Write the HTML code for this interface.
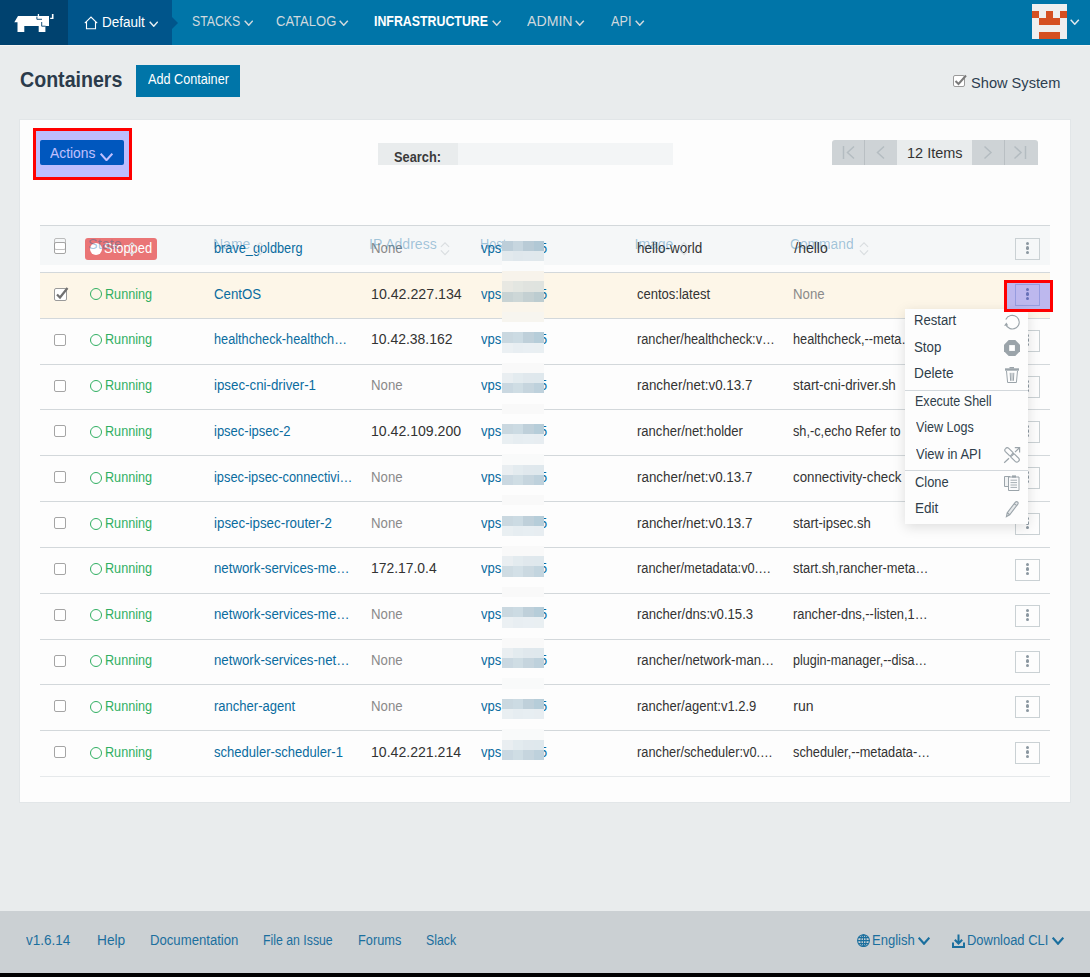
<!DOCTYPE html>
<html><head><meta charset="utf-8"><style>
html,body{margin:0;padding:0}
body{width:1090px;height:977px;position:relative;overflow:hidden;background:#e9eced;font-family:"Liberation Sans", sans-serif}
.t{position:absolute;white-space:nowrap;transform-origin:0 0}
</style></head><body>
<div style="position:absolute;left:0px;top:0px;width:1090px;height:45px;background:#0075a8"></div>
<div style="position:absolute;left:0px;top:0px;width:68px;height:45px;background:#00426f"></div>
<div style="position:absolute;left:68px;top:0px;width:104px;height:45px;background:#00558b"></div>
<svg style="position:absolute;left:172px;top:17px" width="6" height="12"><path d="M0 0 L6 6 L0 12 Z" fill="#00558b"/></svg>
<div style="position:absolute;left:0px;top:45px;width:1090px;height:1px;background:#f6f5f3"></div>
<svg style="position:absolute;left:0;top:0" width="68" height="45" viewBox="0 0 68 45">
<path fill="#fff" d="M14.3 22.2 L18 16 L49 16 L49 25.9 L45.4 25.9 L45.4 32 L38.7 32 L38.7 26 L24.3 26 L24.3 32 L17.5 32 L17.5 22.2 Z"/>
<path fill="#fff" d="M37.8 13.9 L39.1 13.9 L39.1 16.5 L37.8 16.5 Z M51.9 13.9 L53.5 13.9 L53.5 19 L50.2 19 L50.2 17.7 L51.9 17.7 Z"/>
<path fill="none" stroke="#00426f" stroke-width="0.9" d="M36.9 16.6 L36.9 19.3 L42 19.3 M41.7 22 L41.7 26.2 L45.6 26.2"/>
</svg>
<svg style="position:absolute;left:84px;top:16px" width="15" height="14" viewBox="0 0 15 14">
<path fill="none" stroke="#fff" stroke-width="1.1" d="M0.8 7.2 L7 1 L13.2 7.2 M2.5 5.7 L2.5 12.8 L11.5 12.8 L11.5 5.7"/></svg>
<span class="t" id="t0" style="left:102.03px;top:11.65px;font-size:14px;line-height:20px;font-weight:400;color:#fff;transform:scaleX(0.9651);">Default</span>
<svg style="position:absolute;left:148.5px;top:20.5px" width="9.5" height="6" viewBox="0 0 9.5 6"><path fill="none" stroke="#e6eef2" stroke-width="1.5" d="M0.7 0.7 L4.75 5.2 L8.8 0.7"/></svg>
<span class="t" id="t1" style="left:191.52px;top:11.15px;font-size:14px;line-height:20px;font-weight:400;color:#d0d9de;transform:scaleX(0.8778);">STACKS</span>
<svg style="position:absolute;left:243.5px;top:19.8px" width="9.5" height="6" viewBox="0 0 9.5 6"><path fill="none" stroke="#d0d9de" stroke-width="1.5" d="M0.7 0.7 L4.75 5.2 L8.8 0.7"/></svg>
<span class="t" id="t2" style="left:275.67px;top:11.15px;font-size:14px;line-height:20px;font-weight:400;color:#d0d9de;transform:scaleX(0.9302);">CATALOG</span>
<svg style="position:absolute;left:339.3px;top:19.8px" width="9.5" height="6" viewBox="0 0 9.5 6"><path fill="none" stroke="#d0d9de" stroke-width="1.5" d="M0.7 0.7 L4.75 5.2 L8.8 0.7"/></svg>
<span class="t" id="t3" style="left:374.12px;top:11.15px;font-size:14px;line-height:20px;font-weight:700;color:#fff;transform:scaleX(0.8828);">INFRASTRUCTURE</span>
<svg style="position:absolute;left:491.6px;top:19.8px" width="9.5" height="6" viewBox="0 0 9.5 6"><path fill="none" stroke="#d0d9de" stroke-width="1.5" d="M0.7 0.7 L4.75 5.2 L8.8 0.7"/></svg>
<span class="t" id="t4" style="left:527.00px;top:11.15px;font-size:14px;line-height:20px;font-weight:400;color:#d0d9de;transform:scaleX(1.0091);">ADMIN</span>
<svg style="position:absolute;left:575.3px;top:19.8px" width="9.5" height="6" viewBox="0 0 9.5 6"><path fill="none" stroke="#d0d9de" stroke-width="1.5" d="M0.7 0.7 L4.75 5.2 L8.8 0.7"/></svg>
<span class="t" id="t5" style="left:611.20px;top:11.15px;font-size:14px;line-height:20px;font-weight:400;color:#d0d9de;transform:scaleX(0.9045);">API</span>
<svg style="position:absolute;left:635.3px;top:19.8px" width="9.5" height="6" viewBox="0 0 9.5 6"><path fill="none" stroke="#d0d9de" stroke-width="1.5" d="M0.7 0.7 L4.75 5.2 L8.8 0.7"/></svg>
<div style="position:absolute;left:1032px;top:4px;width:35px;height:35px;background:#efefef"></div>
<div style="position:absolute;left:1032px;top:11px;width:7px;height:7px;background:#d55022"></div>
<div style="position:absolute;left:1046px;top:11px;width:7px;height:7px;background:#d55022"></div>
<div style="position:absolute;left:1060px;top:11px;width:7px;height:7px;background:#d55022"></div>
<div style="position:absolute;left:1039px;top:18px;width:7px;height:7px;background:#d55022"></div>
<div style="position:absolute;left:1046px;top:18px;width:7px;height:7px;background:#d55022"></div>
<div style="position:absolute;left:1053px;top:18px;width:7px;height:7px;background:#d55022"></div>
<div style="position:absolute;left:1039px;top:32px;width:7px;height:7px;background:#d55022"></div>
<div style="position:absolute;left:1046px;top:32px;width:7px;height:7px;background:#d55022"></div>
<div style="position:absolute;left:1053px;top:32px;width:7px;height:7px;background:#d55022"></div>
<svg style="position:absolute;left:1070.3px;top:18.8px" width="9.5" height="6" viewBox="0 0 9.5 6"><path fill="none" stroke="#dfe8ee" stroke-width="1.5" d="M0.7 0.7 L4.75 5.2 L8.8 0.7"/></svg>
<span class="t" id="t6" style="left:19.69px;top:64.55px;font-size:21.5px;line-height:30px;font-weight:700;color:#2b3b4b;transform:scaleX(0.9117);">Containers</span>
<div style="position:absolute;left:136px;top:65px;width:104px;height:32px;background:#0075a8"></div>
<span class="t" id="t7" style="left:147.60px;top:69.10px;font-size:15px;line-height:20px;font-weight:400;color:#fff;transform:scaleX(0.8438);">Add Container</span>
<svg style="position:absolute;left:952px;top:74px" width="16" height="14" viewBox="0 0 16 14">
<rect x="1.5" y="1.5" width="11" height="11" rx="1.5" fill="#fff" stroke="#9a9a9a" stroke-width="1"/>
<path d="M3.5 7 L6.5 10 L14 1.5" fill="none" stroke="#7a7a7a" stroke-width="2"/></svg>
<span class="t" id="t8" style="left:970.59px;top:72.98px;font-size:14.5px;line-height:20px;font-weight:400;color:#2d3e50;transform:scaleX(1.0080);">Show System</span>
<div style="position:absolute;left:19px;top:119px;width:1052px;height:684px;background:#fdfdfd;border:1px solid #e2e6e8;box-sizing:border-box"></div>
<div style="position:absolute;left:40px;top:140px;width:84px;height:25px;background:#0075a8;border-radius:2px"></div>
<span class="t" id="t9" style="left:50.00px;top:143.15px;font-size:14px;line-height:20px;font-weight:400;color:#fff;transform:scaleX(0.9870);">Actions</span>
<svg style="position:absolute;left:100px;top:152.5px" width="13" height="8" viewBox="0 0 13 8"><path fill="none" stroke="#fff" stroke-width="2" d="M0.7 0.7 L6.5 7.2 L12.3 0.7"/></svg>
<div style="position:absolute;left:378px;top:143px;width:80px;height:22px;background:#e9eced"></div>
<div style="position:absolute;left:458px;top:143px;width:215px;height:22px;background:#f3f5f6"></div>
<span class="t" id="t10" style="left:394.09px;top:147.15px;font-size:14px;line-height:20px;font-weight:700;color:#3a3a3a;transform:scaleX(0.9143);">Search:</span>
<div style="position:absolute;left:832px;top:140px;width:206px;height:25px;border-radius:3px 3px 0 0;overflow:hidden;background:#ced3d6">
<div style="position:absolute;left:32px;top:0;width:1px;height:25px;background:#b9bfc3"></div>
<div style="position:absolute;left:65px;top:0;width:75px;height:25px;background:#e9eced"></div>
<div style="position:absolute;left:172px;top:0;width:1px;height:25px;background:#b9bfc3"></div>
<svg style="position:absolute;left:0;top:0" width="206" height="25">
<g fill="none" stroke="#b4bcc1" stroke-width="1.5">
<path d="M11.5 6 L11.5 19 M22 6.5 L15.5 12.5 L22 18.5"/>
<path d="M52 6.5 L45.5 12.5 L52 18.5"/>
<path d="M152.5 6.5 L159 12.5 L152.5 18.5"/>
<path d="M182.5 6.5 L189 12.5 L182.5 18.5 M193.5 6 L193.5 19"/>
</g></svg></div>
<span class="t" id="t11" style="left:906.57px;top:143.15px;font-size:14px;line-height:20px;font-weight:400;color:#333;transform:scaleX(1.0346);">12 Items</span>
<div style="position:absolute;left:40px;top:226px;width:1010px;height:46px;background:#fdfdfd"></div>
<div style="position:absolute;left:40px;top:272px;width:1010px;height:46px;background:#fdf6e8"></div>
<div style="position:absolute;left:40px;top:318px;width:1010px;height:46px;background:#fdfdfd"></div>
<div style="position:absolute;left:40px;top:364px;width:1010px;height:45px;background:#fdfdfd"></div>
<div style="position:absolute;left:40px;top:409px;width:1010px;height:46px;background:#fdfdfd"></div>
<div style="position:absolute;left:40px;top:455px;width:1010px;height:46px;background:#fdfdfd"></div>
<div style="position:absolute;left:40px;top:501px;width:1010px;height:46px;background:#fdfdfd"></div>
<div style="position:absolute;left:40px;top:547px;width:1010px;height:46px;background:#fdfdfd"></div>
<div style="position:absolute;left:40px;top:593px;width:1010px;height:46px;background:#fdfdfd"></div>
<div style="position:absolute;left:40px;top:639px;width:1010px;height:45px;background:#fdfdfd"></div>
<div style="position:absolute;left:40px;top:684px;width:1010px;height:46px;background:#fdfdfd"></div>
<div style="position:absolute;left:40px;top:730px;width:1010px;height:46px;background:#fdfdfd"></div>
<div style="position:absolute;left:40px;top:226px;width:1010px;height:39px;background:#f5f7f8"></div>
<div style="position:absolute;left:40px;top:272px;width:1010px;height:1px;background:#d3d8db"></div>
<div style="position:absolute;left:40px;top:318px;width:1010px;height:1px;background:#d3d8db"></div>
<div style="position:absolute;left:40px;top:364px;width:1010px;height:1px;background:#d3d8db"></div>
<div style="position:absolute;left:40px;top:409px;width:1010px;height:1px;background:#d3d8db"></div>
<div style="position:absolute;left:40px;top:455px;width:1010px;height:1px;background:#d3d8db"></div>
<div style="position:absolute;left:40px;top:501px;width:1010px;height:1px;background:#d3d8db"></div>
<div style="position:absolute;left:40px;top:547px;width:1010px;height:1px;background:#d3d8db"></div>
<div style="position:absolute;left:40px;top:593px;width:1010px;height:1px;background:#d3d8db"></div>
<div style="position:absolute;left:40px;top:639px;width:1010px;height:1px;background:#d3d8db"></div>
<div style="position:absolute;left:40px;top:684px;width:1010px;height:1px;background:#d3d8db"></div>
<div style="position:absolute;left:40px;top:730px;width:1010px;height:1px;background:#d3d8db"></div>
<div style="position:absolute;left:40px;top:776px;width:1010px;height:1px;background:#e6e9eb"></div>
<div style="position:absolute;left:40px;top:225px;width:1010px;height:1px;background:#d3d8db"></div>
<div style="position:absolute;left:54px;top:242px;width:12px;height:12px;border:1px solid #a5a5a5;border-radius:2px;box-sizing:border-box;background:#fff"></div>
<span class="t" id="t12" style="left:214.49px;top:237.75px;font-size:14px;line-height:20px;font-weight:400;color:#0a6c9f;transform:scaleX(0.9094);">brave_goldberg</span>
<span class="t" id="t13" style="left:370.66px;top:237.75px;font-size:14px;line-height:20px;font-weight:400;color:#8a8a8a;transform:scaleX(0.9437);">None</span>
<span class="t" id="t14" style="left:481.00px;top:237.75px;font-size:14px;line-height:20px;font-weight:400;color:#0a6c9f;transform:scaleX(0.9333);">vps</span>
<span class="t" id="t15" style="left:539.59px;top:237.75px;font-size:14px;line-height:20px;font-weight:400;color:#0a6c9f;transform:scaleX(0.9100);">5</span>
<span class="t" id="t16" style="left:637.43px;top:237.75px;font-size:14px;line-height:20px;font-weight:400;color:#333;transform:scaleX(0.9652);">hello-world</span>
<span class="t" id="t17" style="left:794.30px;top:237.75px;font-size:14px;line-height:20px;font-weight:400;color:#333;transform:scaleX(1.0000);">/hello</span>
<div style="position:absolute;left:1015px;top:238px;width:25px;height:22px;border:1px solid #cad1d4;box-sizing:border-box;">
<div style="position:absolute;left:9.6px;top:2.6px;width:3.2px;height:3.2px;border-radius:50%;background:#8b97a0"></div>
<div style="position:absolute;left:9.6px;top:7.45px;width:3.2px;height:3.2px;border-radius:50%;background:#8b97a0"></div>
<div style="position:absolute;left:9.6px;top:12.3px;width:3.2px;height:3.2px;border-radius:50%;background:#8b97a0"></div></div>
<svg style="position:absolute;left:53px;top:285px" width="16" height="17" viewBox="0 0 16 17">
<rect x="1.5" y="3.5" width="12" height="12" rx="1.5" fill="#fff" stroke="#9a9a9a" stroke-width="1"/>
<path d="M4 9.5 L7 12.5 L14.5 3" fill="none" stroke="#707070" stroke-width="2.2"/></svg>
<div style="position:absolute;left:90px;top:288px;width:12px;height:12px;border:1px solid #30af62;border-radius:50%;box-sizing:border-box"></div>
<span class="t" id="t18" style="left:104.80px;top:283.55px;font-size:14px;line-height:20px;font-weight:400;color:#30af62;transform:scaleX(0.9020);">Running</span>
<span class="t" id="t19" style="left:214.45px;top:283.55px;font-size:14px;line-height:20px;font-weight:400;color:#0a6c9f;transform:scaleX(0.9458);">CentOS</span>
<span class="t" id="t20" style="left:370.59px;top:283.55px;font-size:14px;line-height:20px;font-weight:400;color:#333;transform:scaleX(1.0136);">10.42.227.134</span>
<span class="t" id="t21" style="left:481.00px;top:283.55px;font-size:14px;line-height:20px;font-weight:400;color:#0a6c9f;transform:scaleX(0.9333);">vps</span>
<span class="t" id="t22" style="left:539.59px;top:283.55px;font-size:14px;line-height:20px;font-weight:400;color:#0a6c9f;transform:scaleX(0.9100);">5</span>
<span class="t" id="t23" style="left:637.47px;top:283.55px;font-size:14px;line-height:20px;font-weight:400;color:#333;transform:scaleX(0.9295);">centos:latest</span>
<span class="t" id="t24" style="left:793.36px;top:283.55px;font-size:14px;line-height:20px;font-weight:400;color:#8a8a8a;transform:scaleX(0.9437);">None</span>
<div style="position:absolute;left:1015px;top:284px;width:25px;height:22px;border:1px solid #cad1d4;box-sizing:border-box;">
<div style="position:absolute;left:9.6px;top:2.6px;width:3.2px;height:3.2px;border-radius:50%;background:#8b97a0"></div>
<div style="position:absolute;left:9.6px;top:7.45px;width:3.2px;height:3.2px;border-radius:50%;background:#8b97a0"></div>
<div style="position:absolute;left:9.6px;top:12.3px;width:3.2px;height:3.2px;border-radius:50%;background:#8b97a0"></div></div>
<div style="position:absolute;left:54px;top:334px;width:12px;height:12px;border:1px solid #a5a5a5;border-radius:2px;box-sizing:border-box;background:#fff"></div>
<div style="position:absolute;left:90px;top:334px;width:12px;height:12px;border:1px solid #30af62;border-radius:50%;box-sizing:border-box"></div>
<span class="t" id="t25" style="left:104.80px;top:329.37px;font-size:14px;line-height:20px;font-weight:400;color:#30af62;transform:scaleX(0.9020);">Running</span>
<span class="t" id="t26" style="left:214.49px;top:329.37px;font-size:14px;line-height:20px;font-weight:400;color:#0a6c9f;transform:scaleX(0.9083);">healthcheck-healthch…</span>
<span class="t" id="t27" style="left:370.60px;top:329.37px;font-size:14px;line-height:20px;font-weight:400;color:#333;transform:scaleX(0.9963);">10.42.38.162</span>
<span class="t" id="t28" style="left:481.00px;top:329.37px;font-size:14px;line-height:20px;font-weight:400;color:#0a6c9f;transform:scaleX(0.9333);">vps</span>
<span class="t" id="t29" style="left:539.59px;top:329.37px;font-size:14px;line-height:20px;font-weight:400;color:#0a6c9f;transform:scaleX(0.9100);">5</span>
<span class="t" id="t30" style="left:637.49px;top:329.37px;font-size:14px;line-height:20px;font-weight:400;color:#333;transform:scaleX(0.9128);">rancher/healthcheck:v…</span>
<span class="t" id="t31" style="left:793.39px;top:329.37px;font-size:14px;line-height:20px;font-weight:400;color:#333;transform:scaleX(0.9100);">healthcheck,--meta…</span>
<div style="position:absolute;left:1015px;top:330px;width:25px;height:22px;border:1px solid #cad1d4;box-sizing:border-box;">
<div style="position:absolute;left:9.6px;top:2.6px;width:3.2px;height:3.2px;border-radius:50%;background:#8b97a0"></div>
<div style="position:absolute;left:9.6px;top:7.45px;width:3.2px;height:3.2px;border-radius:50%;background:#8b97a0"></div>
<div style="position:absolute;left:9.6px;top:12.3px;width:3.2px;height:3.2px;border-radius:50%;background:#8b97a0"></div></div>
<div style="position:absolute;left:54px;top:380px;width:12px;height:12px;border:1px solid #a5a5a5;border-radius:2px;box-sizing:border-box;background:#fff"></div>
<div style="position:absolute;left:90px;top:380px;width:12px;height:12px;border:1px solid #30af62;border-radius:50%;box-sizing:border-box"></div>
<span class="t" id="t32" style="left:104.80px;top:375.19px;font-size:14px;line-height:20px;font-weight:400;color:#30af62;transform:scaleX(0.9020);">Running</span>
<span class="t" id="t33" style="left:214.45px;top:375.19px;font-size:14px;line-height:20px;font-weight:400;color:#0a6c9f;transform:scaleX(0.9500);">ipsec-cni-driver-1</span>
<span class="t" id="t34" style="left:370.66px;top:375.19px;font-size:14px;line-height:20px;font-weight:400;color:#8a8a8a;transform:scaleX(0.9437);">None</span>
<span class="t" id="t35" style="left:481.00px;top:375.19px;font-size:14px;line-height:20px;font-weight:400;color:#0a6c9f;transform:scaleX(0.9333);">vps</span>
<span class="t" id="t36" style="left:539.59px;top:375.19px;font-size:14px;line-height:20px;font-weight:400;color:#0a6c9f;transform:scaleX(0.9100);">5</span>
<span class="t" id="t37" style="left:637.44px;top:375.19px;font-size:14px;line-height:20px;font-weight:400;color:#333;transform:scaleX(0.9563);">rancher/net:v0.13.7</span>
<span class="t" id="t38" style="left:793.34px;top:375.19px;font-size:14px;line-height:20px;font-weight:400;color:#333;transform:scaleX(0.9575);">start-cni-driver.sh</span>
<div style="position:absolute;left:1015px;top:376px;width:25px;height:22px;border:1px solid #cad1d4;box-sizing:border-box;">
<div style="position:absolute;left:9.6px;top:2.6px;width:3.2px;height:3.2px;border-radius:50%;background:#8b97a0"></div>
<div style="position:absolute;left:9.6px;top:7.45px;width:3.2px;height:3.2px;border-radius:50%;background:#8b97a0"></div>
<div style="position:absolute;left:9.6px;top:12.3px;width:3.2px;height:3.2px;border-radius:50%;background:#8b97a0"></div></div>
<div style="position:absolute;left:54px;top:425px;width:12px;height:12px;border:1px solid #a5a5a5;border-radius:2px;box-sizing:border-box;background:#fff"></div>
<div style="position:absolute;left:90px;top:426px;width:12px;height:12px;border:1px solid #30af62;border-radius:50%;box-sizing:border-box"></div>
<span class="t" id="t39" style="left:104.80px;top:421.01px;font-size:14px;line-height:20px;font-weight:400;color:#30af62;transform:scaleX(0.9020);">Running</span>
<span class="t" id="t40" style="left:214.47px;top:421.01px;font-size:14px;line-height:20px;font-weight:400;color:#0a6c9f;transform:scaleX(0.9284);">ipsec-ipsec-2</span>
<span class="t" id="t41" style="left:370.59px;top:421.01px;font-size:14px;line-height:20px;font-weight:400;color:#333;transform:scaleX(1.0057);">10.42.109.200</span>
<span class="t" id="t42" style="left:481.00px;top:421.01px;font-size:14px;line-height:20px;font-weight:400;color:#0a6c9f;transform:scaleX(0.9333);">vps</span>
<span class="t" id="t43" style="left:539.59px;top:421.01px;font-size:14px;line-height:20px;font-weight:400;color:#0a6c9f;transform:scaleX(0.9100);">5</span>
<span class="t" id="t44" style="left:637.47px;top:421.01px;font-size:14px;line-height:20px;font-weight:400;color:#333;transform:scaleX(0.9319);">rancher/net:holder</span>
<span class="t" id="t45" style="left:793.39px;top:421.01px;font-size:14px;line-height:20px;font-weight:400;color:#333;transform:scaleX(0.9100);">sh,-c,echo Refer to …</span>
<div style="position:absolute;left:1015px;top:421px;width:25px;height:22px;border:1px solid #cad1d4;box-sizing:border-box;">
<div style="position:absolute;left:9.6px;top:2.6px;width:3.2px;height:3.2px;border-radius:50%;background:#8b97a0"></div>
<div style="position:absolute;left:9.6px;top:7.45px;width:3.2px;height:3.2px;border-radius:50%;background:#8b97a0"></div>
<div style="position:absolute;left:9.6px;top:12.3px;width:3.2px;height:3.2px;border-radius:50%;background:#8b97a0"></div></div>
<div style="position:absolute;left:54px;top:471px;width:12px;height:12px;border:1px solid #a5a5a5;border-radius:2px;box-sizing:border-box;background:#fff"></div>
<div style="position:absolute;left:90px;top:472px;width:12px;height:12px;border:1px solid #30af62;border-radius:50%;box-sizing:border-box"></div>
<span class="t" id="t46" style="left:104.80px;top:466.83px;font-size:14px;line-height:20px;font-weight:400;color:#30af62;transform:scaleX(0.9020);">Running</span>
<span class="t" id="t47" style="left:214.48px;top:466.83px;font-size:14px;line-height:20px;font-weight:400;color:#0a6c9f;transform:scaleX(0.9169);">ipsec-ipsec-connectivi…</span>
<span class="t" id="t48" style="left:370.66px;top:466.83px;font-size:14px;line-height:20px;font-weight:400;color:#8a8a8a;transform:scaleX(0.9437);">None</span>
<span class="t" id="t49" style="left:481.00px;top:466.83px;font-size:14px;line-height:20px;font-weight:400;color:#0a6c9f;transform:scaleX(0.9333);">vps</span>
<span class="t" id="t50" style="left:539.59px;top:466.83px;font-size:14px;line-height:20px;font-weight:400;color:#0a6c9f;transform:scaleX(0.9100);">5</span>
<span class="t" id="t51" style="left:637.44px;top:466.83px;font-size:14px;line-height:20px;font-weight:400;color:#333;transform:scaleX(0.9563);">rancher/net:v0.13.7</span>
<span class="t" id="t52" style="left:793.35px;top:466.83px;font-size:14px;line-height:20px;font-weight:400;color:#333;transform:scaleX(0.9478);">connectivity-check</span>
<div style="position:absolute;left:1015px;top:467px;width:25px;height:22px;border:1px solid #cad1d4;box-sizing:border-box;">
<div style="position:absolute;left:9.6px;top:2.6px;width:3.2px;height:3.2px;border-radius:50%;background:#8b97a0"></div>
<div style="position:absolute;left:9.6px;top:7.45px;width:3.2px;height:3.2px;border-radius:50%;background:#8b97a0"></div>
<div style="position:absolute;left:9.6px;top:12.3px;width:3.2px;height:3.2px;border-radius:50%;background:#8b97a0"></div></div>
<div style="position:absolute;left:54px;top:517px;width:12px;height:12px;border:1px solid #a5a5a5;border-radius:2px;box-sizing:border-box;background:#fff"></div>
<div style="position:absolute;left:90px;top:518px;width:12px;height:12px;border:1px solid #30af62;border-radius:50%;box-sizing:border-box"></div>
<span class="t" id="t53" style="left:104.80px;top:512.65px;font-size:14px;line-height:20px;font-weight:400;color:#30af62;transform:scaleX(0.9020);">Running</span>
<span class="t" id="t54" style="left:214.45px;top:512.65px;font-size:14px;line-height:20px;font-weight:400;color:#0a6c9f;transform:scaleX(0.9525);">ipsec-ipsec-router-2</span>
<span class="t" id="t55" style="left:370.66px;top:512.65px;font-size:14px;line-height:20px;font-weight:400;color:#8a8a8a;transform:scaleX(0.9437);">None</span>
<span class="t" id="t56" style="left:481.00px;top:512.65px;font-size:14px;line-height:20px;font-weight:400;color:#0a6c9f;transform:scaleX(0.9333);">vps</span>
<span class="t" id="t57" style="left:539.59px;top:512.65px;font-size:14px;line-height:20px;font-weight:400;color:#0a6c9f;transform:scaleX(0.9100);">5</span>
<span class="t" id="t58" style="left:637.44px;top:512.65px;font-size:14px;line-height:20px;font-weight:400;color:#333;transform:scaleX(0.9563);">rancher/net:v0.13.7</span>
<span class="t" id="t59" style="left:793.37px;top:512.65px;font-size:14px;line-height:20px;font-weight:400;color:#333;transform:scaleX(0.9341);">start-ipsec.sh</span>
<div style="position:absolute;left:1015px;top:513px;width:25px;height:22px;border:1px solid #cad1d4;box-sizing:border-box;">
<div style="position:absolute;left:9.6px;top:2.6px;width:3.2px;height:3.2px;border-radius:50%;background:#8b97a0"></div>
<div style="position:absolute;left:9.6px;top:7.45px;width:3.2px;height:3.2px;border-radius:50%;background:#8b97a0"></div>
<div style="position:absolute;left:9.6px;top:12.3px;width:3.2px;height:3.2px;border-radius:50%;background:#8b97a0"></div></div>
<div style="position:absolute;left:54px;top:563px;width:12px;height:12px;border:1px solid #a5a5a5;border-radius:2px;box-sizing:border-box;background:#fff"></div>
<div style="position:absolute;left:90px;top:563px;width:12px;height:12px;border:1px solid #30af62;border-radius:50%;box-sizing:border-box"></div>
<span class="t" id="t60" style="left:104.80px;top:558.47px;font-size:14px;line-height:20px;font-weight:400;color:#30af62;transform:scaleX(0.9020);">Running</span>
<span class="t" id="t61" style="left:214.45px;top:558.47px;font-size:14px;line-height:20px;font-weight:400;color:#0a6c9f;transform:scaleX(0.9468);">network-services-me…</span>
<span class="t" id="t62" style="left:370.61px;top:558.47px;font-size:14px;line-height:20px;font-weight:400;color:#333;transform:scaleX(0.9923);">172.17.0.4</span>
<span class="t" id="t63" style="left:481.00px;top:558.47px;font-size:14px;line-height:20px;font-weight:400;color:#0a6c9f;transform:scaleX(0.9333);">vps</span>
<span class="t" id="t64" style="left:539.59px;top:558.47px;font-size:14px;line-height:20px;font-weight:400;color:#0a6c9f;transform:scaleX(0.9100);">5</span>
<span class="t" id="t65" style="left:637.48px;top:558.47px;font-size:14px;line-height:20px;font-weight:400;color:#333;transform:scaleX(0.9167);">rancher/metadata:v0.…</span>
<span class="t" id="t66" style="left:793.38px;top:558.47px;font-size:14px;line-height:20px;font-weight:400;color:#333;transform:scaleX(0.9201);">start.sh,rancher-meta…</span>
<div style="position:absolute;left:1015px;top:559px;width:25px;height:22px;border:1px solid #cad1d4;box-sizing:border-box;">
<div style="position:absolute;left:9.6px;top:2.6px;width:3.2px;height:3.2px;border-radius:50%;background:#8b97a0"></div>
<div style="position:absolute;left:9.6px;top:7.45px;width:3.2px;height:3.2px;border-radius:50%;background:#8b97a0"></div>
<div style="position:absolute;left:9.6px;top:12.3px;width:3.2px;height:3.2px;border-radius:50%;background:#8b97a0"></div></div>
<div style="position:absolute;left:54px;top:609px;width:12px;height:12px;border:1px solid #a5a5a5;border-radius:2px;box-sizing:border-box;background:#fff"></div>
<div style="position:absolute;left:90px;top:609px;width:12px;height:12px;border:1px solid #30af62;border-radius:50%;box-sizing:border-box"></div>
<span class="t" id="t67" style="left:104.80px;top:604.29px;font-size:14px;line-height:20px;font-weight:400;color:#30af62;transform:scaleX(0.9020);">Running</span>
<span class="t" id="t68" style="left:214.45px;top:604.29px;font-size:14px;line-height:20px;font-weight:400;color:#0a6c9f;transform:scaleX(0.9468);">network-services-me…</span>
<span class="t" id="t69" style="left:370.66px;top:604.29px;font-size:14px;line-height:20px;font-weight:400;color:#8a8a8a;transform:scaleX(0.9437);">None</span>
<span class="t" id="t70" style="left:481.00px;top:604.29px;font-size:14px;line-height:20px;font-weight:400;color:#0a6c9f;transform:scaleX(0.9333);">vps</span>
<span class="t" id="t71" style="left:539.59px;top:604.29px;font-size:14px;line-height:20px;font-weight:400;color:#0a6c9f;transform:scaleX(0.9100);">5</span>
<span class="t" id="t72" style="left:637.46px;top:604.29px;font-size:14px;line-height:20px;font-weight:400;color:#333;transform:scaleX(0.9385);">rancher/dns:v0.15.3</span>
<span class="t" id="t73" style="left:793.38px;top:604.29px;font-size:14px;line-height:20px;font-weight:400;color:#333;transform:scaleX(0.9201);">rancher-dns,--listen,1…</span>
<div style="position:absolute;left:1015px;top:605px;width:25px;height:22px;border:1px solid #cad1d4;box-sizing:border-box;">
<div style="position:absolute;left:9.6px;top:2.6px;width:3.2px;height:3.2px;border-radius:50%;background:#8b97a0"></div>
<div style="position:absolute;left:9.6px;top:7.45px;width:3.2px;height:3.2px;border-radius:50%;background:#8b97a0"></div>
<div style="position:absolute;left:9.6px;top:12.3px;width:3.2px;height:3.2px;border-radius:50%;background:#8b97a0"></div></div>
<div style="position:absolute;left:54px;top:655px;width:12px;height:12px;border:1px solid #a5a5a5;border-radius:2px;box-sizing:border-box;background:#fff"></div>
<div style="position:absolute;left:90px;top:655px;width:12px;height:12px;border:1px solid #30af62;border-radius:50%;box-sizing:border-box"></div>
<span class="t" id="t74" style="left:104.80px;top:650.11px;font-size:14px;line-height:20px;font-weight:400;color:#30af62;transform:scaleX(0.9020);">Running</span>
<span class="t" id="t75" style="left:214.45px;top:650.11px;font-size:14px;line-height:20px;font-weight:400;color:#0a6c9f;transform:scaleX(0.9468);">network-services-net…</span>
<span class="t" id="t76" style="left:370.66px;top:650.11px;font-size:14px;line-height:20px;font-weight:400;color:#8a8a8a;transform:scaleX(0.9437);">None</span>
<span class="t" id="t77" style="left:481.00px;top:650.11px;font-size:14px;line-height:20px;font-weight:400;color:#0a6c9f;transform:scaleX(0.9333);">vps</span>
<span class="t" id="t78" style="left:539.59px;top:650.11px;font-size:14px;line-height:20px;font-weight:400;color:#0a6c9f;transform:scaleX(0.9100);">5</span>
<span class="t" id="t79" style="left:637.46px;top:650.11px;font-size:14px;line-height:20px;font-weight:400;color:#333;transform:scaleX(0.9375);">rancher/network-man…</span>
<span class="t" id="t80" style="left:793.40px;top:650.11px;font-size:14px;line-height:20px;font-weight:400;color:#333;transform:scaleX(0.8980);">plugin-manager,--disa…</span>
<div style="position:absolute;left:1015px;top:651px;width:25px;height:22px;border:1px solid #cad1d4;box-sizing:border-box;">
<div style="position:absolute;left:9.6px;top:2.6px;width:3.2px;height:3.2px;border-radius:50%;background:#8b97a0"></div>
<div style="position:absolute;left:9.6px;top:7.45px;width:3.2px;height:3.2px;border-radius:50%;background:#8b97a0"></div>
<div style="position:absolute;left:9.6px;top:12.3px;width:3.2px;height:3.2px;border-radius:50%;background:#8b97a0"></div></div>
<div style="position:absolute;left:54px;top:700px;width:12px;height:12px;border:1px solid #a5a5a5;border-radius:2px;box-sizing:border-box;background:#fff"></div>
<div style="position:absolute;left:90px;top:701px;width:12px;height:12px;border:1px solid #30af62;border-radius:50%;box-sizing:border-box"></div>
<span class="t" id="t81" style="left:104.80px;top:695.93px;font-size:14px;line-height:20px;font-weight:400;color:#30af62;transform:scaleX(0.9020);">Running</span>
<span class="t" id="t82" style="left:214.47px;top:695.93px;font-size:14px;line-height:20px;font-weight:400;color:#0a6c9f;transform:scaleX(0.9302);">rancher-agent</span>
<span class="t" id="t83" style="left:370.66px;top:695.93px;font-size:14px;line-height:20px;font-weight:400;color:#8a8a8a;transform:scaleX(0.9437);">None</span>
<span class="t" id="t84" style="left:481.00px;top:695.93px;font-size:14px;line-height:20px;font-weight:400;color:#0a6c9f;transform:scaleX(0.9333);">vps</span>
<span class="t" id="t85" style="left:539.59px;top:695.93px;font-size:14px;line-height:20px;font-weight:400;color:#0a6c9f;transform:scaleX(0.9100);">5</span>
<span class="t" id="t86" style="left:637.47px;top:695.93px;font-size:14px;line-height:20px;font-weight:400;color:#333;transform:scaleX(0.9291);">rancher/agent:v1.2.9</span>
<span class="t" id="t87" style="left:793.30px;top:695.93px;font-size:14px;line-height:20px;font-weight:400;color:#333;transform:scaleX(1.0000);">run</span>
<div style="position:absolute;left:1015px;top:696px;width:25px;height:22px;border:1px solid #cad1d4;box-sizing:border-box;">
<div style="position:absolute;left:9.6px;top:2.6px;width:3.2px;height:3.2px;border-radius:50%;background:#8b97a0"></div>
<div style="position:absolute;left:9.6px;top:7.45px;width:3.2px;height:3.2px;border-radius:50%;background:#8b97a0"></div>
<div style="position:absolute;left:9.6px;top:12.3px;width:3.2px;height:3.2px;border-radius:50%;background:#8b97a0"></div></div>
<div style="position:absolute;left:54px;top:746px;width:12px;height:12px;border:1px solid #a5a5a5;border-radius:2px;box-sizing:border-box;background:#fff"></div>
<div style="position:absolute;left:90px;top:747px;width:12px;height:12px;border:1px solid #30af62;border-radius:50%;box-sizing:border-box"></div>
<span class="t" id="t88" style="left:104.80px;top:741.75px;font-size:14px;line-height:20px;font-weight:400;color:#30af62;transform:scaleX(0.9020);">Running</span>
<span class="t" id="t89" style="left:214.47px;top:741.75px;font-size:14px;line-height:20px;font-weight:400;color:#0a6c9f;transform:scaleX(0.9307);">scheduler-scheduler-1</span>
<span class="t" id="t90" style="left:370.59px;top:741.75px;font-size:14px;line-height:20px;font-weight:400;color:#333;transform:scaleX(1.0057);">10.42.221.214</span>
<span class="t" id="t91" style="left:481.00px;top:741.75px;font-size:14px;line-height:20px;font-weight:400;color:#0a6c9f;transform:scaleX(0.9333);">vps</span>
<span class="t" id="t92" style="left:539.59px;top:741.75px;font-size:14px;line-height:20px;font-weight:400;color:#0a6c9f;transform:scaleX(0.9100);">5</span>
<span class="t" id="t93" style="left:637.49px;top:741.75px;font-size:14px;line-height:20px;font-weight:400;color:#333;transform:scaleX(0.9144);">rancher/scheduler:v0.…</span>
<span class="t" id="t94" style="left:793.39px;top:741.75px;font-size:14px;line-height:20px;font-weight:400;color:#333;transform:scaleX(0.9122);">scheduler,--metadata-…</span>
<div style="position:absolute;left:1015px;top:742px;width:25px;height:22px;border:1px solid #cad1d4;box-sizing:border-box;">
<div style="position:absolute;left:9.6px;top:2.6px;width:3.2px;height:3.2px;border-radius:50%;background:#8b97a0"></div>
<div style="position:absolute;left:9.6px;top:7.45px;width:3.2px;height:3.2px;border-radius:50%;background:#8b97a0"></div>
<div style="position:absolute;left:9.6px;top:12.3px;width:3.2px;height:3.2px;border-radius:50%;background:#8b97a0"></div></div>
<div style="position:absolute;left:85px;top:238px;width:72px;height:22px;background:#ea7576;border-radius:3px"></div>
<div style="position:absolute;left:90px;top:243px;width:12px;height:12px;background:#fff;border-radius:50%"></div>
<span class="t" id="t95" style="left:104.28px;top:237.75px;font-size:14px;line-height:20px;font-weight:400;color:#fff;transform:scaleX(0.9240);">Stopped</span>
<span class="t" id="t96" style="left:87.66px;top:233.65px;font-size:14px;line-height:20px;font-weight:400;color:rgba(0,100,160,0.36);transform:scaleX(1.0387);">State</span>
<span class="t" id="t97" style="left:213.00px;top:233.65px;font-size:14px;line-height:20px;font-weight:400;color:rgba(0,100,160,0.36);transform:scaleX(1.0000);">Name</span>
<span class="t" id="t98" style="left:368.50px;top:233.65px;font-size:14px;line-height:20px;font-weight:400;color:rgba(0,100,160,0.36);transform:scaleX(1.0045);">IP Address</span>
<span class="t" id="t99" style="left:479.59px;top:233.65px;font-size:14px;line-height:20px;font-weight:400;color:rgba(0,100,160,0.36);transform:scaleX(0.9100);">Host</span>
<span class="t" id="t100" style="left:634.50px;top:233.65px;font-size:14px;line-height:20px;font-weight:400;color:rgba(0,100,160,0.36);transform:scaleX(1.0000);">Image</span>
<span class="t" id="t101" style="left:790.42px;top:233.65px;font-size:14px;line-height:20px;font-weight:400;color:rgba(0,100,160,0.36);transform:scaleX(0.9841);">Command</span>
<svg style="position:absolute;left:126.5px;top:241px" width="10" height="15" viewBox="0 0 10 15"><path fill="none" stroke="#d9dde0" stroke-width="1.1" d="M0.9 5.8 L5 1.8 L9.1 5.8 M0.9 9.3 L5 13.6 L9.1 9.3"/></svg>
<svg style="position:absolute;left:254.5px;top:241px" width="10" height="15" viewBox="0 0 10 15"><path fill="none" stroke="#d9dde0" stroke-width="1.1" d="M0.9 5.8 L5 1.8 L9.1 5.8 M0.9 9.3 L5 13.6 L9.1 9.3"/></svg>
<svg style="position:absolute;left:440.4px;top:241px" width="10" height="15" viewBox="0 0 10 15"><path fill="none" stroke="#d9dde0" stroke-width="1.1" d="M0.9 5.8 L5 1.8 L9.1 5.8 M0.9 9.3 L5 13.6 L9.1 9.3"/></svg>
<svg style="position:absolute;left:679.0px;top:241px" width="10" height="15" viewBox="0 0 10 15"><path fill="none" stroke="#d9dde0" stroke-width="1.1" d="M0.9 5.8 L5 1.8 L9.1 5.8 M0.9 9.3 L5 13.6 L9.1 9.3"/></svg>
<svg style="position:absolute;left:859.0px;top:241px" width="10" height="15" viewBox="0 0 10 15"><path fill="none" stroke="#d9dde0" stroke-width="1.1" d="M0.9 5.8 L5 1.8 L9.1 5.8 M0.9 9.3 L5 13.6 L9.1 9.3"/></svg>
<div style="position:absolute;left:54px;top:238px;width:12px;height:12px;border:1px solid rgba(150,150,150,0.6);border-radius:2px;box-sizing:border-box"></div>
<div style="position:absolute;left:0px;top:911px;width:1090px;height:62px;background:#cbd0d3"></div>
<div style="position:absolute;left:0px;top:973px;width:1090px;height:4px;background:#000"></div>
<span class="t" id="t102" style="left:26.20px;top:929.75px;font-size:14px;line-height:20px;font-weight:400;color:#1b6f9e;transform:scaleX(0.9652);">v1.6.14</span>
<span class="t" id="t103" style="left:96.62px;top:929.75px;font-size:14px;line-height:20px;font-weight:400;color:#1b6f9e;transform:scaleX(0.9778);">Help</span>
<span class="t" id="t104" style="left:149.86px;top:929.75px;font-size:14px;line-height:20px;font-weight:400;color:#1b6f9e;transform:scaleX(0.9387);">Documentation</span>
<span class="t" id="t105" style="left:263.12px;top:929.75px;font-size:14px;line-height:20px;font-weight:400;color:#1b6f9e;transform:scaleX(0.8782);">File an Issue</span>
<span class="t" id="t106" style="left:358.09px;top:929.75px;font-size:14px;line-height:20px;font-weight:400;color:#1b6f9e;transform:scaleX(0.9130);">Forums</span>
<span class="t" id="t107" style="left:425.62px;top:929.75px;font-size:14px;line-height:20px;font-weight:400;color:#1b6f9e;transform:scaleX(0.8788);">Slack</span>
<span class="t" id="t108" style="left:872.07px;top:929.75px;font-size:14px;line-height:20px;font-weight:400;color:#1b6f9e;transform:scaleX(0.9318);">English</span>
<span class="t" id="t109" style="left:967.08px;top:929.75px;font-size:14px;line-height:20px;font-weight:400;color:#1b6f9e;transform:scaleX(0.9244);">Download CLI</span>
<svg style="position:absolute;left:857px;top:934px" width="14" height="14" viewBox="0 0 14 14">
<g fill="none" stroke="#1b6f9e" stroke-width="1.1"><circle cx="6.5" cy="6.6" r="5.9"/><ellipse cx="6.5" cy="6.6" rx="2.6" ry="5.9"/>
<path d="M0.6 6.6 H12.4 M1.4 3.6 H11.6 M1.4 9.6 H11.6 M6.5 0.7 V12.5"/></g></svg>
<svg style="position:absolute;left:917.5px;top:937px" width="12" height="7.5" viewBox="0 0 12 7.5"><path fill="none" stroke="#1b6f9e" stroke-width="2.2" d="M0.7 0.7 L6.0 6.7 L11.3 0.7"/></svg>
<svg style="position:absolute;left:952px;top:933px" width="14" height="16" viewBox="0 0 14 16">
<g fill="none" stroke="#1b6f9e" stroke-width="2"><path d="M6.5 1.5 V10.5 M2.8 6.8 L6.5 10.5 L10.2 6.8 M1 9.5 V14 H12 V9.5"/></g></svg>
<svg style="position:absolute;left:1051.5px;top:937px" width="12" height="7.5" viewBox="0 0 12 7.5"><path fill="none" stroke="#1b6f9e" stroke-width="2.2" d="M0.7 0.7 L6.0 6.7 L11.3 0.7"/></svg>
<div style="position:absolute;left:905px;top:309px;width:123px;height:215px;background:#fdfdfd;box-shadow:0 3px 12px rgba(0,0,0,0.13);"></div>
<div style="position:absolute;left:905px;top:390px;width:123px;height:1px;background:#d3d8dc"></div>
<div style="position:absolute;left:905px;top:470px;width:123px;height:1px;background:#d3d8dc"></div>
<span class="t" id="t110" style="left:914.46px;top:309.95px;font-size:14px;line-height:20px;font-weight:400;color:#2f3d4a;transform:scaleX(0.9364);">Restart</span>
<span class="t" id="t111" style="left:914.45px;top:337.15px;font-size:14px;line-height:20px;font-weight:400;color:#2f3d4a;transform:scaleX(0.9481);">Stop</span>
<span class="t" id="t112" style="left:914.42px;top:362.85px;font-size:14px;line-height:20px;font-weight:400;color:#2f3d4a;transform:scaleX(0.9769);">Delete</span>
<span class="t" id="t113" style="left:914.60px;top:390.95px;font-size:14px;line-height:20px;font-weight:400;color:#2f3d4a;transform:scaleX(0.8952);">Execute Shell</span>
<span class="t" id="t114" style="left:915.50px;top:416.85px;font-size:14px;line-height:20px;font-weight:400;color:#2f3d4a;transform:scaleX(0.8969);">View Logs</span>
<span class="t" id="t115" style="left:915.50px;top:443.85px;font-size:14px;line-height:20px;font-weight:400;color:#2f3d4a;transform:scaleX(0.9257);">View in API</span>
<span class="t" id="t116" style="left:914.58px;top:472.15px;font-size:14px;line-height:20px;font-weight:400;color:#2f3d4a;transform:scaleX(0.9200);">Clone</span>
<span class="t" id="t117" style="left:914.53px;top:498.05px;font-size:14px;line-height:20px;font-weight:400;color:#2f3d4a;transform:scaleX(0.9652);">Edit</span>
<svg style="position:absolute;left:1000px;top:310px" width="24" height="22" viewBox="0 0 24 22">
<path fill="none" stroke="#9ba4aa" stroke-width="1.1" d="M5.6 14.3 A7 6.8 0 1 0 5.8 9.5"/><path fill="#9ba4aa" d="M4 15.8 L8.2 15.6 L6.4 12.4 Z"/></svg>
<svg style="position:absolute;left:1004px;top:340px" width="16" height="16" viewBox="0 0 16 16">
<path fill="#9ba4aa" d="M4.7 0 H11.3 L16 4.7 V11.3 L11.3 16 H4.7 L0 11.3 V4.7 Z"/><rect x="5.2" y="5.1" width="5.7" height="5.8" fill="#fff"/></svg>
<svg style="position:absolute;left:1004px;top:366px" width="16" height="18" viewBox="0 0 16 18">
<g fill="none" stroke="#9ba4aa" stroke-width="1"><path d="M2.5 5 L3.6 16.5 H12.4 L13.5 5 M6.2 6.8 L6.6 14.8 M9.8 6.8 L9.4 14.8 M8 6.8 V14.8"/></g>
<rect x="1" y="2.3" width="14" height="2.4" fill="#9ba4aa"/><rect x="5.5" y="1" width="4.5" height="1.5" fill="#9ba4aa"/></svg>
<svg style="position:absolute;left:1002px;top:445px" width="20" height="20" viewBox="0 0 20 20">
<g fill="none" stroke="#9ba4aa" stroke-width="1.2">
<path d="M3.6 3.6 Q5 1.8 6.8 3.4 L10.6 7.2 Q12.2 9 10.4 10.4 Q8.8 11.8 7.2 10.4 L3.4 6.6 Q1.9 5 3.6 3.6 Z"/>
<path d="M9.6 9.6 Q11 7.8 12.8 9.4 L16.6 13.2 Q18.2 15 16.4 16.4 Q14.8 17.8 13.2 16.4 L9.4 12.6 Q7.9 11 9.6 9.6 Z"/>
<path d="M2.2 17.8 L7 13.2 M13 7.2 L17.6 2.6 M12.8 2.6 H17.6 V7.4"/></g></svg>
<svg style="position:absolute;left:1003px;top:474px" width="18" height="18" viewBox="0 0 18 18">
<g stroke="#9ba4aa" stroke-width="1"><path d="M1.5 2.5 H7 V12.5 H1.5 Z" fill="#f1f3f4"/><path d="M5.5 3 H16 V16.5 H5.5 Z" fill="#fbfbfc"/>
<path d="M7.5 6.2 H14 M7.5 8.6 H14 M7.5 11 H14 M7.5 13.4 H14" stroke-width="0.9"/></g>
<rect x="9" y="1.4" width="4" height="2.2" fill="#9ba4aa"/></svg>
<svg style="position:absolute;left:1004px;top:500px" width="16" height="18" viewBox="0 0 16 18">
<g fill="#e6e9eb" stroke="#9ba4aa" stroke-width="1.1"><path d="M3.2 12.8 L11.2 2.3 Q12.4 1 13.6 2 Q14.7 3 13.7 4.3 L5.7 14.8 L2.4 16.6 Z M10.2 3.6 L12.7 5.6 M3.2 12.8 L5.7 14.8"/></g></svg>
<div style="position:absolute;left:33px;top:128px;width:99px;height:52px;border:3px solid #ff0000;box-sizing:border-box;background:rgba(0,0,255,0.25)"></div>
<div style="position:absolute;left:1004px;top:280px;width:49px;height:32px;border:3px solid #ff0000;box-sizing:border-box;background:rgba(0,0,255,0.25)"></div>
<div style="position:absolute;left:502px;top:240.70px;width:10.70px;height:10.4px;background:#bdced9"></div>
<div style="position:absolute;left:512.5px;top:240.70px;width:10.70px;height:10.4px;background:#c7d6df"></div>
<div style="position:absolute;left:523px;top:240.70px;width:10.70px;height:10.4px;background:#b9cbd6"></div>
<div style="position:absolute;left:533.5px;top:240.70px;width:10.70px;height:10.4px;background:#b1c8d5"></div>
<div style="position:absolute;left:502px;top:250.88px;width:10.70px;height:10.4px;background:#e2e9ed"></div>
<div style="position:absolute;left:512.5px;top:250.88px;width:10.70px;height:10.4px;background:#dfe7ec"></div>
<div style="position:absolute;left:523px;top:250.88px;width:10.70px;height:10.4px;background:#e0e8ed"></div>
<div style="position:absolute;left:533.5px;top:250.88px;width:10.70px;height:10.4px;background:#e0e8ec"></div>
<div style="position:absolute;left:502px;top:261.06px;width:10.70px;height:10.4px;background:#fafbfb"></div>
<div style="position:absolute;left:512.5px;top:261.06px;width:10.70px;height:10.4px;background:#fafbfb"></div>
<div style="position:absolute;left:523px;top:261.06px;width:10.70px;height:10.4px;background:#fafbfb"></div>
<div style="position:absolute;left:533.5px;top:261.06px;width:10.70px;height:10.4px;background:#fafbfb"></div>
<div style="position:absolute;left:502px;top:271.24px;width:10.70px;height:10.4px;background:#f7f3eb"></div>
<div style="position:absolute;left:512.5px;top:271.24px;width:10.70px;height:10.4px;background:#f7f3eb"></div>
<div style="position:absolute;left:523px;top:271.24px;width:10.70px;height:10.4px;background:#f7f3eb"></div>
<div style="position:absolute;left:533.5px;top:271.24px;width:10.70px;height:10.4px;background:#f7f3eb"></div>
<div style="position:absolute;left:502px;top:281.42px;width:10.70px;height:10.4px;background:#e8e8e2"></div>
<div style="position:absolute;left:512.5px;top:281.42px;width:10.70px;height:10.4px;background:#e3e6e1"></div>
<div style="position:absolute;left:523px;top:281.42px;width:10.70px;height:10.4px;background:#e0e3df"></div>
<div style="position:absolute;left:533.5px;top:281.42px;width:10.70px;height:10.4px;background:#dfe3df"></div>
<div style="position:absolute;left:502px;top:291.60px;width:10.70px;height:10.4px;background:#c8d3d4"></div>
<div style="position:absolute;left:512.5px;top:291.60px;width:10.70px;height:10.4px;background:#cdd7d7"></div>
<div style="position:absolute;left:523px;top:291.60px;width:10.70px;height:10.4px;background:#c4d0d2"></div>
<div style="position:absolute;left:533.5px;top:291.60px;width:10.70px;height:10.4px;background:#bcccd0"></div>
<div style="position:absolute;left:502px;top:301.78px;width:10.70px;height:10.4px;background:#faf5eb"></div>
<div style="position:absolute;left:512.5px;top:301.78px;width:10.70px;height:10.4px;background:#faf5eb"></div>
<div style="position:absolute;left:523px;top:301.78px;width:10.70px;height:10.4px;background:#faf5eb"></div>
<div style="position:absolute;left:533.5px;top:301.78px;width:10.70px;height:10.4px;background:#faf5eb"></div>
<div style="position:absolute;left:502px;top:311.96px;width:10.70px;height:10.4px;background:#f7f5ef"></div>
<div style="position:absolute;left:512.5px;top:311.96px;width:10.70px;height:10.4px;background:#f7f5ef"></div>
<div style="position:absolute;left:523px;top:311.96px;width:10.70px;height:10.4px;background:#f7f5ef"></div>
<div style="position:absolute;left:533.5px;top:311.96px;width:10.70px;height:10.4px;background:#f7f5ef"></div>
<div style="position:absolute;left:502px;top:322.14px;width:10.70px;height:10.4px;background:#fdfdfd"></div>
<div style="position:absolute;left:512.5px;top:322.14px;width:10.70px;height:10.4px;background:#fdfdfd"></div>
<div style="position:absolute;left:523px;top:322.14px;width:10.70px;height:10.4px;background:#fdfdfd"></div>
<div style="position:absolute;left:533.5px;top:322.14px;width:10.70px;height:10.4px;background:#fdfdfd"></div>
<div style="position:absolute;left:502px;top:332.32px;width:10.70px;height:10.4px;background:#cad8e0"></div>
<div style="position:absolute;left:512.5px;top:332.32px;width:10.70px;height:10.4px;background:#ccdbe3"></div>
<div style="position:absolute;left:523px;top:332.32px;width:10.70px;height:10.4px;background:#bfd0da"></div>
<div style="position:absolute;left:533.5px;top:332.32px;width:10.70px;height:10.4px;background:#b6cdd9"></div>
<div style="position:absolute;left:502px;top:342.50px;width:10.70px;height:10.4px;background:#ebf0f3"></div>
<div style="position:absolute;left:512.5px;top:342.50px;width:10.70px;height:10.4px;background:#e8eef2"></div>
<div style="position:absolute;left:523px;top:342.50px;width:10.70px;height:10.4px;background:#e9eff3"></div>
<div style="position:absolute;left:533.5px;top:342.50px;width:10.70px;height:10.4px;background:#e9eff2"></div>
<div style="position:absolute;left:502px;top:352.68px;width:10.70px;height:10.4px;background:#fdfdfd"></div>
<div style="position:absolute;left:512.5px;top:352.68px;width:10.70px;height:10.4px;background:#fdfdfd"></div>
<div style="position:absolute;left:523px;top:352.68px;width:10.70px;height:10.4px;background:#fdfdfd"></div>
<div style="position:absolute;left:533.5px;top:352.68px;width:10.70px;height:10.4px;background:#fdfdfd"></div>
<div style="position:absolute;left:502px;top:362.86px;width:10.70px;height:10.4px;background:#f9f9f9"></div>
<div style="position:absolute;left:512.5px;top:362.86px;width:10.70px;height:10.4px;background:#f9f9f9"></div>
<div style="position:absolute;left:523px;top:362.86px;width:10.70px;height:10.4px;background:#f9f9f9"></div>
<div style="position:absolute;left:533.5px;top:362.86px;width:10.70px;height:10.4px;background:#f9f9f9"></div>
<div style="position:absolute;left:502px;top:373.04px;width:10.70px;height:10.4px;background:#e9eef1"></div>
<div style="position:absolute;left:512.5px;top:373.04px;width:10.70px;height:10.4px;background:#e3ebef"></div>
<div style="position:absolute;left:523px;top:373.04px;width:10.70px;height:10.4px;background:#e0e8ed"></div>
<div style="position:absolute;left:533.5px;top:373.04px;width:10.70px;height:10.4px;background:#dfe8ed"></div>
<div style="position:absolute;left:502px;top:383.22px;width:10.70px;height:10.4px;background:#cad8e1"></div>
<div style="position:absolute;left:512.5px;top:383.22px;width:10.70px;height:10.4px;background:#cfdde4"></div>
<div style="position:absolute;left:523px;top:383.22px;width:10.70px;height:10.4px;background:#c6d5de"></div>
<div style="position:absolute;left:533.5px;top:383.22px;width:10.70px;height:10.4px;background:#bed1dc"></div>
<div style="position:absolute;left:502px;top:393.40px;width:10.70px;height:10.4px;background:#fdfdfd"></div>
<div style="position:absolute;left:512.5px;top:393.40px;width:10.70px;height:10.4px;background:#fdfdfd"></div>
<div style="position:absolute;left:523px;top:393.40px;width:10.70px;height:10.4px;background:#fdfdfd"></div>
<div style="position:absolute;left:533.5px;top:393.40px;width:10.70px;height:10.4px;background:#fdfdfd"></div>
<div style="position:absolute;left:502px;top:403.58px;width:10.70px;height:10.4px;background:#f9f9f9"></div>
<div style="position:absolute;left:512.5px;top:403.58px;width:10.70px;height:10.4px;background:#f9f9f9"></div>
<div style="position:absolute;left:523px;top:403.58px;width:10.70px;height:10.4px;background:#f9f9f9"></div>
<div style="position:absolute;left:533.5px;top:403.58px;width:10.70px;height:10.4px;background:#f9f9f9"></div>
<div style="position:absolute;left:502px;top:413.76px;width:10.70px;height:10.4px;background:#fdfdfd"></div>
<div style="position:absolute;left:512.5px;top:413.76px;width:10.70px;height:10.4px;background:#fdfdfd"></div>
<div style="position:absolute;left:523px;top:413.76px;width:10.70px;height:10.4px;background:#fdfdfd"></div>
<div style="position:absolute;left:533.5px;top:413.76px;width:10.70px;height:10.4px;background:#fdfdfd"></div>
<div style="position:absolute;left:502px;top:423.94px;width:10.70px;height:10.4px;background:#cad8e0"></div>
<div style="position:absolute;left:512.5px;top:423.94px;width:10.70px;height:10.4px;background:#ccdbe3"></div>
<div style="position:absolute;left:523px;top:423.94px;width:10.70px;height:10.4px;background:#bfd0da"></div>
<div style="position:absolute;left:533.5px;top:423.94px;width:10.70px;height:10.4px;background:#b6cdd9"></div>
<div style="position:absolute;left:502px;top:434.12px;width:10.70px;height:10.4px;background:#e9eff2"></div>
<div style="position:absolute;left:512.5px;top:434.12px;width:10.70px;height:10.4px;background:#e6edf1"></div>
<div style="position:absolute;left:523px;top:434.12px;width:10.70px;height:10.4px;background:#e7eef2"></div>
<div style="position:absolute;left:533.5px;top:434.12px;width:10.70px;height:10.4px;background:#e7edf1"></div>
<div style="position:absolute;left:502px;top:444.30px;width:10.70px;height:10.4px;background:#fdfdfd"></div>
<div style="position:absolute;left:512.5px;top:444.30px;width:10.70px;height:10.4px;background:#fdfdfd"></div>
<div style="position:absolute;left:523px;top:444.30px;width:10.70px;height:10.4px;background:#fdfdfd"></div>
<div style="position:absolute;left:533.5px;top:444.30px;width:10.70px;height:10.4px;background:#fdfdfd"></div>
<div style="position:absolute;left:502px;top:454.48px;width:10.70px;height:10.4px;background:#f9fafa"></div>
<div style="position:absolute;left:512.5px;top:454.48px;width:10.70px;height:10.4px;background:#f9fafa"></div>
<div style="position:absolute;left:523px;top:454.48px;width:10.70px;height:10.4px;background:#f9fafa"></div>
<div style="position:absolute;left:533.5px;top:454.48px;width:10.70px;height:10.4px;background:#f9fafa"></div>
<div style="position:absolute;left:502px;top:464.66px;width:10.70px;height:10.4px;background:#e9eef1"></div>
<div style="position:absolute;left:512.5px;top:464.66px;width:10.70px;height:10.4px;background:#e3ebef"></div>
<div style="position:absolute;left:523px;top:464.66px;width:10.70px;height:10.4px;background:#e0e8ed"></div>
<div style="position:absolute;left:533.5px;top:464.66px;width:10.70px;height:10.4px;background:#dfe8ed"></div>
<div style="position:absolute;left:502px;top:474.84px;width:10.70px;height:10.4px;background:#cad8e1"></div>
<div style="position:absolute;left:512.5px;top:474.84px;width:10.70px;height:10.4px;background:#cfdde4"></div>
<div style="position:absolute;left:523px;top:474.84px;width:10.70px;height:10.4px;background:#c6d5de"></div>
<div style="position:absolute;left:533.5px;top:474.84px;width:10.70px;height:10.4px;background:#bed1dc"></div>
<div style="position:absolute;left:502px;top:485.02px;width:10.70px;height:10.4px;background:#fdfdfd"></div>
<div style="position:absolute;left:512.5px;top:485.02px;width:10.70px;height:10.4px;background:#fdfdfd"></div>
<div style="position:absolute;left:523px;top:485.02px;width:10.70px;height:10.4px;background:#fdfdfd"></div>
<div style="position:absolute;left:533.5px;top:485.02px;width:10.70px;height:10.4px;background:#fdfdfd"></div>
<div style="position:absolute;left:502px;top:495.20px;width:10.70px;height:10.4px;background:#f9f9f9"></div>
<div style="position:absolute;left:512.5px;top:495.20px;width:10.70px;height:10.4px;background:#f9f9f9"></div>
<div style="position:absolute;left:523px;top:495.20px;width:10.70px;height:10.4px;background:#f9f9f9"></div>
<div style="position:absolute;left:533.5px;top:495.20px;width:10.70px;height:10.4px;background:#f9f9f9"></div>
<div style="position:absolute;left:502px;top:505.38px;width:10.70px;height:10.4px;background:#fdfdfd"></div>
<div style="position:absolute;left:512.5px;top:505.38px;width:10.70px;height:10.4px;background:#fdfdfd"></div>
<div style="position:absolute;left:523px;top:505.38px;width:10.70px;height:10.4px;background:#fdfdfd"></div>
<div style="position:absolute;left:533.5px;top:505.38px;width:10.70px;height:10.4px;background:#fdfdfd"></div>
<div style="position:absolute;left:502px;top:515.56px;width:10.70px;height:10.4px;background:#cad8e0"></div>
<div style="position:absolute;left:512.5px;top:515.56px;width:10.70px;height:10.4px;background:#ccdbe3"></div>
<div style="position:absolute;left:523px;top:515.56px;width:10.70px;height:10.4px;background:#bfd0da"></div>
<div style="position:absolute;left:533.5px;top:515.56px;width:10.70px;height:10.4px;background:#b6cdd9"></div>
<div style="position:absolute;left:502px;top:525.74px;width:10.70px;height:10.4px;background:#e9eff2"></div>
<div style="position:absolute;left:512.5px;top:525.74px;width:10.70px;height:10.4px;background:#e6edf1"></div>
<div style="position:absolute;left:523px;top:525.74px;width:10.70px;height:10.4px;background:#e7eef2"></div>
<div style="position:absolute;left:533.5px;top:525.74px;width:10.70px;height:10.4px;background:#e7edf1"></div>
<div style="position:absolute;left:502px;top:535.92px;width:10.70px;height:10.4px;background:#fdfdfd"></div>
<div style="position:absolute;left:512.5px;top:535.92px;width:10.70px;height:10.4px;background:#fdfdfd"></div>
<div style="position:absolute;left:523px;top:535.92px;width:10.70px;height:10.4px;background:#fdfdfd"></div>
<div style="position:absolute;left:533.5px;top:535.92px;width:10.70px;height:10.4px;background:#fdfdfd"></div>
<div style="position:absolute;left:502px;top:546.10px;width:10.70px;height:10.4px;background:#f9f9f9"></div>
<div style="position:absolute;left:512.5px;top:546.10px;width:10.70px;height:10.4px;background:#f9f9f9"></div>
<div style="position:absolute;left:523px;top:546.10px;width:10.70px;height:10.4px;background:#f9f9f9"></div>
<div style="position:absolute;left:533.5px;top:546.10px;width:10.70px;height:10.4px;background:#f9f9f9"></div>
<div style="position:absolute;left:502px;top:556.28px;width:10.70px;height:10.4px;background:#e9eef1"></div>
<div style="position:absolute;left:512.5px;top:556.28px;width:10.70px;height:10.4px;background:#e3ebef"></div>
<div style="position:absolute;left:523px;top:556.28px;width:10.70px;height:10.4px;background:#e0e8ed"></div>
<div style="position:absolute;left:533.5px;top:556.28px;width:10.70px;height:10.4px;background:#dfe8ed"></div>
<div style="position:absolute;left:502px;top:566.46px;width:10.70px;height:10.4px;background:#cfdce3"></div>
<div style="position:absolute;left:512.5px;top:566.46px;width:10.70px;height:10.4px;background:#d3e0e7"></div>
<div style="position:absolute;left:523px;top:566.46px;width:10.70px;height:10.4px;background:#cbd9e1"></div>
<div style="position:absolute;left:533.5px;top:566.46px;width:10.70px;height:10.4px;background:#c3d5df"></div>
<div style="position:absolute;left:502px;top:576.64px;width:10.70px;height:10.4px;background:#fdfdfd"></div>
<div style="position:absolute;left:512.5px;top:576.64px;width:10.70px;height:10.4px;background:#fdfdfd"></div>
<div style="position:absolute;left:523px;top:576.64px;width:10.70px;height:10.4px;background:#fdfdfd"></div>
<div style="position:absolute;left:533.5px;top:576.64px;width:10.70px;height:10.4px;background:#fdfdfd"></div>
<div style="position:absolute;left:502px;top:586.82px;width:10.70px;height:10.4px;background:#f9f9f9"></div>
<div style="position:absolute;left:512.5px;top:586.82px;width:10.70px;height:10.4px;background:#f9f9f9"></div>
<div style="position:absolute;left:523px;top:586.82px;width:10.70px;height:10.4px;background:#f9f9f9"></div>
<div style="position:absolute;left:533.5px;top:586.82px;width:10.70px;height:10.4px;background:#f9f9f9"></div>
<div style="position:absolute;left:502px;top:597.00px;width:10.70px;height:10.4px;background:#fdfdfd"></div>
<div style="position:absolute;left:512.5px;top:597.00px;width:10.70px;height:10.4px;background:#fdfdfd"></div>
<div style="position:absolute;left:523px;top:597.00px;width:10.70px;height:10.4px;background:#fdfdfd"></div>
<div style="position:absolute;left:533.5px;top:597.00px;width:10.70px;height:10.4px;background:#fdfdfd"></div>
<div style="position:absolute;left:502px;top:607.18px;width:10.70px;height:10.4px;background:#cad8e0"></div>
<div style="position:absolute;left:512.5px;top:607.18px;width:10.70px;height:10.4px;background:#ccdbe3"></div>
<div style="position:absolute;left:523px;top:607.18px;width:10.70px;height:10.4px;background:#bfd0da"></div>
<div style="position:absolute;left:533.5px;top:607.18px;width:10.70px;height:10.4px;background:#b6cdd9"></div>
<div style="position:absolute;left:502px;top:617.36px;width:10.70px;height:10.4px;background:#ebf0f3"></div>
<div style="position:absolute;left:512.5px;top:617.36px;width:10.70px;height:10.4px;background:#e8eef2"></div>
<div style="position:absolute;left:523px;top:617.36px;width:10.70px;height:10.4px;background:#e9eff3"></div>
<div style="position:absolute;left:533.5px;top:617.36px;width:10.70px;height:10.4px;background:#e9eff2"></div>
<div style="position:absolute;left:502px;top:627.54px;width:10.70px;height:10.4px;background:#fdfdfd"></div>
<div style="position:absolute;left:512.5px;top:627.54px;width:10.70px;height:10.4px;background:#fdfdfd"></div>
<div style="position:absolute;left:523px;top:627.54px;width:10.70px;height:10.4px;background:#fdfdfd"></div>
<div style="position:absolute;left:533.5px;top:627.54px;width:10.70px;height:10.4px;background:#fdfdfd"></div>
<div style="position:absolute;left:502px;top:637.72px;width:10.70px;height:10.4px;background:#f9f9f9"></div>
<div style="position:absolute;left:512.5px;top:637.72px;width:10.70px;height:10.4px;background:#f9f9f9"></div>
<div style="position:absolute;left:523px;top:637.72px;width:10.70px;height:10.4px;background:#f9f9f9"></div>
<div style="position:absolute;left:533.5px;top:637.72px;width:10.70px;height:10.4px;background:#f9f9f9"></div>
<div style="position:absolute;left:502px;top:647.90px;width:10.70px;height:10.4px;background:#e9eef1"></div>
<div style="position:absolute;left:512.5px;top:647.90px;width:10.70px;height:10.4px;background:#e3ebef"></div>
<div style="position:absolute;left:523px;top:647.90px;width:10.70px;height:10.4px;background:#e0e8ed"></div>
<div style="position:absolute;left:533.5px;top:647.90px;width:10.70px;height:10.4px;background:#dfe8ed"></div>
<div style="position:absolute;left:502px;top:658.08px;width:10.70px;height:10.4px;background:#cad8e1"></div>
<div style="position:absolute;left:512.5px;top:658.08px;width:10.70px;height:10.4px;background:#cfdde4"></div>
<div style="position:absolute;left:523px;top:658.08px;width:10.70px;height:10.4px;background:#c6d5de"></div>
<div style="position:absolute;left:533.5px;top:658.08px;width:10.70px;height:10.4px;background:#bed1dc"></div>
<div style="position:absolute;left:502px;top:668.26px;width:10.70px;height:10.4px;background:#fdfdfd"></div>
<div style="position:absolute;left:512.5px;top:668.26px;width:10.70px;height:10.4px;background:#fdfdfd"></div>
<div style="position:absolute;left:523px;top:668.26px;width:10.70px;height:10.4px;background:#fdfdfd"></div>
<div style="position:absolute;left:533.5px;top:668.26px;width:10.70px;height:10.4px;background:#fdfdfd"></div>
<div style="position:absolute;left:502px;top:678.44px;width:10.70px;height:10.4px;background:#f9fafa"></div>
<div style="position:absolute;left:512.5px;top:678.44px;width:10.70px;height:10.4px;background:#f9fafa"></div>
<div style="position:absolute;left:523px;top:678.44px;width:10.70px;height:10.4px;background:#f9fafa"></div>
<div style="position:absolute;left:533.5px;top:678.44px;width:10.70px;height:10.4px;background:#f9fafa"></div>
<div style="position:absolute;left:502px;top:688.62px;width:10.70px;height:10.4px;background:#fdfdfd"></div>
<div style="position:absolute;left:512.5px;top:688.62px;width:10.70px;height:10.4px;background:#fdfdfd"></div>
<div style="position:absolute;left:523px;top:688.62px;width:10.70px;height:10.4px;background:#fdfdfd"></div>
<div style="position:absolute;left:533.5px;top:688.62px;width:10.70px;height:10.4px;background:#fdfdfd"></div>
<div style="position:absolute;left:502px;top:698.80px;width:10.70px;height:10.4px;background:#cad8e0"></div>
<div style="position:absolute;left:512.5px;top:698.80px;width:10.70px;height:10.4px;background:#ccdbe3"></div>
<div style="position:absolute;left:523px;top:698.80px;width:10.70px;height:10.4px;background:#bfd0da"></div>
<div style="position:absolute;left:533.5px;top:698.80px;width:10.70px;height:10.4px;background:#b6cdd9"></div>
<div style="position:absolute;left:502px;top:708.98px;width:10.70px;height:10.4px;background:#e9eff2"></div>
<div style="position:absolute;left:512.5px;top:708.98px;width:10.70px;height:10.4px;background:#e6edf1"></div>
<div style="position:absolute;left:523px;top:708.98px;width:10.70px;height:10.4px;background:#e7eef2"></div>
<div style="position:absolute;left:533.5px;top:708.98px;width:10.70px;height:10.4px;background:#e7edf1"></div>
<div style="position:absolute;left:502px;top:719.16px;width:10.70px;height:10.4px;background:#fdfdfd"></div>
<div style="position:absolute;left:512.5px;top:719.16px;width:10.70px;height:10.4px;background:#fdfdfd"></div>
<div style="position:absolute;left:523px;top:719.16px;width:10.70px;height:10.4px;background:#fdfdfd"></div>
<div style="position:absolute;left:533.5px;top:719.16px;width:10.70px;height:10.4px;background:#fdfdfd"></div>
<div style="position:absolute;left:502px;top:729.34px;width:10.70px;height:10.4px;background:#f9fafa"></div>
<div style="position:absolute;left:512.5px;top:729.34px;width:10.70px;height:10.4px;background:#f9fafa"></div>
<div style="position:absolute;left:523px;top:729.34px;width:10.70px;height:10.4px;background:#f9fafa"></div>
<div style="position:absolute;left:533.5px;top:729.34px;width:10.70px;height:10.4px;background:#f9fafa"></div>
<div style="position:absolute;left:502px;top:739.52px;width:10.70px;height:10.4px;background:#e9eef1"></div>
<div style="position:absolute;left:512.5px;top:739.52px;width:10.70px;height:10.4px;background:#e3ebef"></div>
<div style="position:absolute;left:523px;top:739.52px;width:10.70px;height:10.4px;background:#e0e8ed"></div>
<div style="position:absolute;left:533.5px;top:739.52px;width:10.70px;height:10.4px;background:#dfe8ed"></div>
<div style="position:absolute;left:502px;top:749.70px;width:10.70px;height:10.4px;background:#cad8e1"></div>
<div style="position:absolute;left:512.5px;top:749.70px;width:10.70px;height:10.4px;background:#cfdde4"></div>
<div style="position:absolute;left:523px;top:749.70px;width:10.70px;height:10.4px;background:#c6d5de"></div>
<div style="position:absolute;left:533.5px;top:749.70px;width:10.70px;height:10.4px;background:#bed1dc"></div>
</body></html>
